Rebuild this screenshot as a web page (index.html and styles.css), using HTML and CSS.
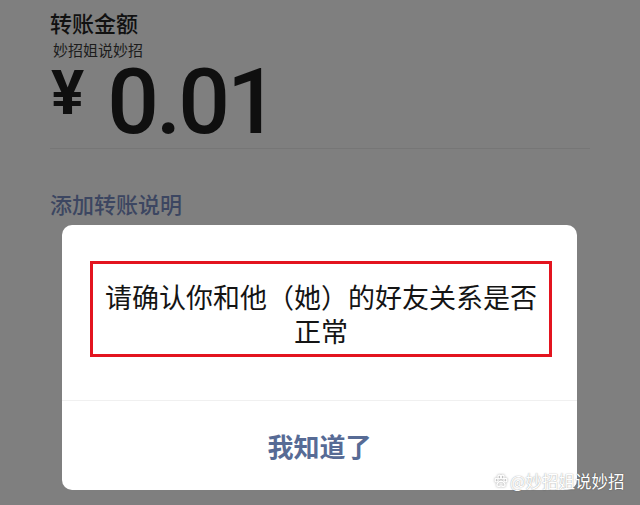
FILE: index.html
```html
<!DOCTYPE html>
<html lang="zh-CN">
<head>
<meta charset="utf-8">
<title>转账</title>
<link rel="stylesheet" href="styles.css">
</head>
<body>
<div class="page">
  <div class="title">转账金额</div>
  <div class="payee">妙招姐说妙招</div>
  <div class="amount">
    <span class="yen">¥</span>
    <span class="num">0.01</span>
  </div>
  <div class="note">添加转账说明</div>
</div>

<div class="dialog">
  <div class="dialog-body">
    <div class="mark">请确认你和他（她）的好友关系是否<br>正常</div>
  </div>
  <div class="dialog-foot">我知道了</div>
</div>

<div class="watermark">
  <svg class="paw" viewBox="0 0 16 16" width="14" height="14" aria-hidden="true">
    <g fill="none" stroke="#fff" stroke-width="1.4">
      <ellipse cx="3" cy="7" rx="1.7" ry="2.1"/>
      <ellipse cx="6.2" cy="3.4" rx="1.7" ry="2.1"/>
      <ellipse cx="9.8" cy="3.4" rx="1.7" ry="2.1"/>
      <ellipse cx="13" cy="7" rx="1.7" ry="2.1"/>
      <path d="M8 8.2c-2.6 0-4.6 2.6-4.6 4.3 0 1.6 1.6 1.9 2.6 1.6 .8-.2 1.3-.5 2-.5s1.2.3 2 .5c1 .3 2.6 0 2.6-1.6 0-1.7-2-4.3-4.6-4.3z"/>
    </g>
  </svg>
  <span>@妙招姐说妙招</span>
</div>
</body>
</html>
```
FILE: styles.css
```css
html, body {
  margin: 0;
  padding: 0;
}
body {
  width: 640px;
  height: 505px;
  background: #7f7f7f;
  font-family: "Noto Sans CJK SC", "Noto Sans", sans-serif;
  overflow: hidden;
  position: relative;
}
.page {
  padding: 7px 50px 0 50px;
}
.title {
  font-size: 22px;
  line-height: 30px;
  font-weight: 500;
  color: #111;
}
.payee {
  margin-top: 4px;
  font-size: 15px;
  line-height: 18px;
  color: #1c1c1c;
  padding-left: 3px;
}
.amount {
  display: flex;
  align-items: flex-start;
  margin-top: 3px;
  border-bottom: 1px solid #767676;
  padding-bottom: 6px;
}
.yen {
  font-family: Roboto, "Liberation Sans", sans-serif;
  font-weight: 700;
  font-size: 62px;
  line-height: 62px;
  margin-left: 1px;
  color: #0f0f0f;
}
.num {
  font-family: Roboto, "Liberation Sans", sans-serif;
  font-weight: 500;
  font-size: 91px;
  line-height: 80px;
  margin-left: 23px;
  letter-spacing: -3px;
  color: #0f0f0f;
}
.note {
  margin-top: 39px;
  font-size: 22px;
  line-height: 30px;
  font-weight: 500;
  color: #3c4661;
}
.dialog {
  position: absolute;
  left: 62px;
  top: 225px;
  width: 515px;
  height: 265px;
  background: #fff;
  border-radius: 10px;
  display: flex;
  flex-direction: column;
  overflow: hidden;
}
.dialog-body {
  height: 175px;
  box-sizing: border-box;
  padding: 36px 25px 0 28px;
}
.mark {
  border: 3px solid #e3141f;
  padding: 16px 0 6px;
  text-align: center;
  font-size: 27px;
  line-height: 34px;
  color: #141414;
}
.dialog-foot {
  flex: 1;
  border-top: 1px solid #f0f0f0;
  display: flex;
  align-items: center;
  justify-content: center;
  font-size: 26px;
  font-weight: 700;
  color: #576b95;
}
.watermark {
  position: absolute;
  left: 494px;
  top: 472px;
  display: flex;
  align-items: center;
  gap: 2px;
  color: #fff;
  font-size: 16.5px;
  line-height: 18px;
  text-shadow: 0 0 1px rgba(0, 0, 0, 0.35), 0 0 2px rgba(0, 0, 0, 0.15);
}
.paw {
  display: block;
  filter: drop-shadow(0 0 1px rgba(0, 0, 0, 0.4));
}
```
